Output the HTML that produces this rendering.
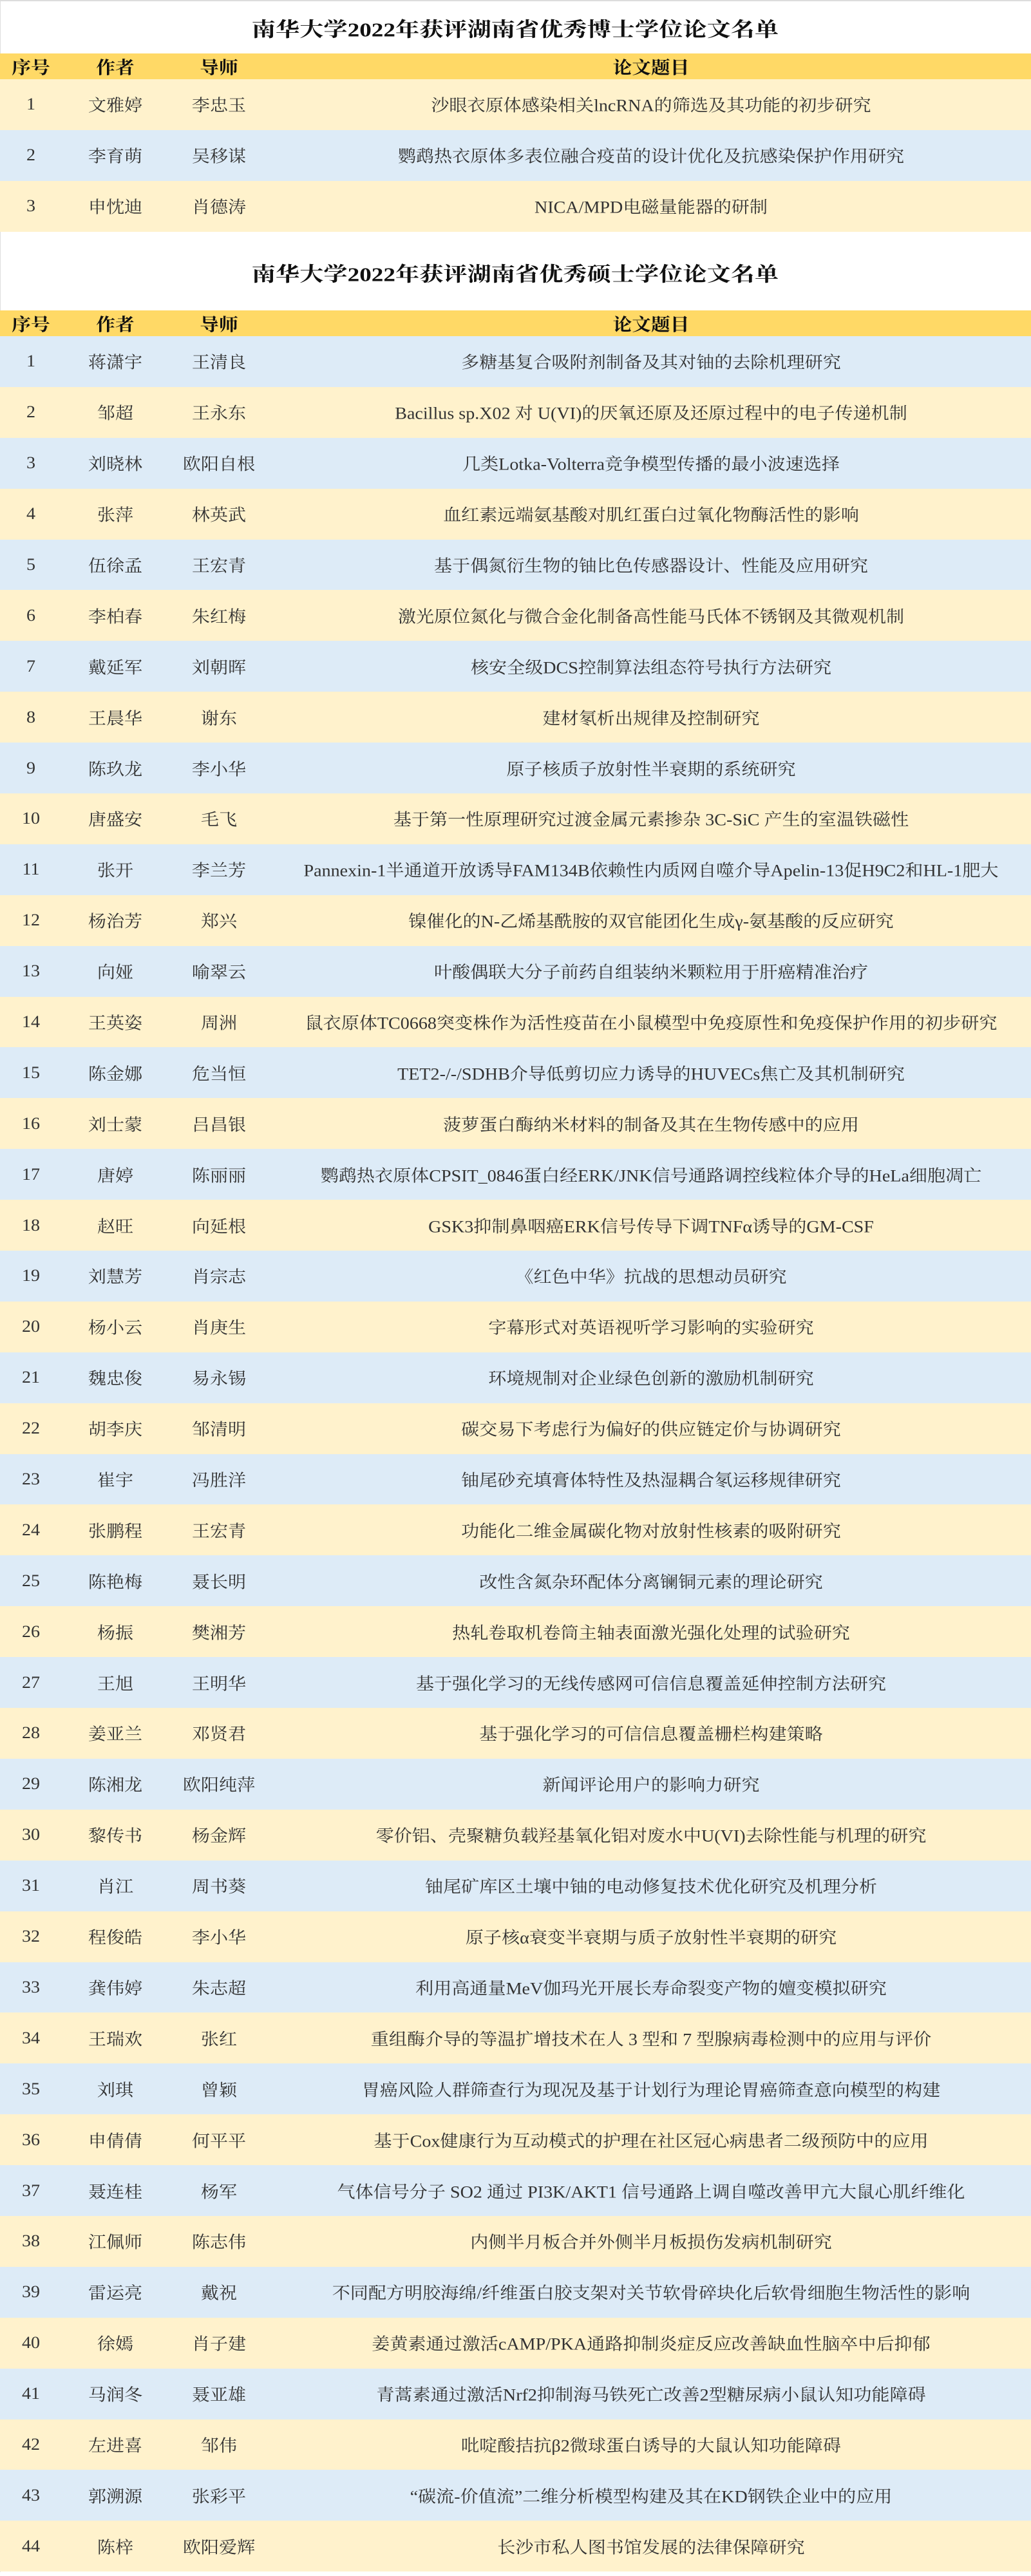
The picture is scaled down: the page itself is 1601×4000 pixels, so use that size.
<!DOCTYPE html>
<html><head><meta charset="utf-8"><style>
html,body{margin:0;padding:0;background:#fff;}
body{width:1601px;height:4000px;overflow:hidden;position:relative;font-family:"Liberation Serif","Noto Serif CJK SC",serif;color:#333;}
.topline{position:absolute;left:0;top:0;width:1601px;height:2px;background:#ddd;}
.leftline{position:absolute;left:0;top:0;width:1px;height:3994px;background:#ddd;}
.t{position:absolute;left:800px;transform:translate(-50%,-50%) scaleX(1.2);font-size:31px;font-weight:bold;color:#111;white-space:nowrap;}
.sec{position:absolute;left:0;width:1601px;}
.r{position:relative;height:78.9px;width:1601px;}
.h{height:40px;background:#FFD966;font-weight:bold;color:#111;font-size:27px;}
.y{background:#FFF2CC;}
.b{background:#DDEBF7;}
.c{position:absolute;top:50%;transform:translate(-50%,-50%) scaleX(1.08);white-space:nowrap;font-size:26px;}
.h .c{font-size:27px;transform:translate(-50%,-50%) scaleX(1.1);}
.a{left:48px}.w{left:179px}.d{left:340px}.p{left:1011px}
</style></head><body>
<div class="topline"></div>
<div class="leftline"></div>
<div class="t" style="top:43px">南华大学2022年获评湖南省优秀博士学位论文名单</div>
<div class="sec" style="top:83px">
<div class="r h"><span class="c a">序号</span><span class="c w">作者</span><span class="c d">导师</span><span class="c p">论文题目</span></div>
<div class="r y"><span class="c a">1</span><span class="c w">文雅婷</span><span class="c d">李忠玉</span><span class="c p">沙眼衣原体感染相关lncRNA的筛选及其功能的初步研究</span></div>
<div class="r b"><span class="c a">2</span><span class="c w">李育萌</span><span class="c d">吴移谋</span><span class="c p">鹦鹉热衣原体多表位融合疫苗的设计优化及抗感染保护作用研究</span></div>
<div class="r y"><span class="c a">3</span><span class="c w">申忱迪</span><span class="c d">肖德涛</span><span class="c p">NICA/MPD电磁量能器的研制</span></div>
</div>
<div class="t" style="top:423px">南华大学2022年获评湖南省优秀硕士学位论文名单</div>
<div class="sec" style="top:482px">
<div class="r h"><span class="c a">序号</span><span class="c w">作者</span><span class="c d">导师</span><span class="c p">论文题目</span></div>
<div class="r b"><span class="c a">1</span><span class="c w">蒋潇宇</span><span class="c d">王清良</span><span class="c p">多糖基复合吸附剂制备及其对铀的去除机理研究</span></div>
<div class="r y"><span class="c a">2</span><span class="c w">邹超</span><span class="c d">王永东</span><span class="c p">Bacillus sp.X02 对 U(VI)的厌氧还原及还原过程中的电子传递机制</span></div>
<div class="r b"><span class="c a">3</span><span class="c w">刘晓林</span><span class="c d">欧阳自根</span><span class="c p">几类Lotka-Volterra竞争模型传播的最小波速选择</span></div>
<div class="r y"><span class="c a">4</span><span class="c w">张萍</span><span class="c d">林英武</span><span class="c p">血红素远端氨基酸对肌红蛋白过氧化物酶活性的影响</span></div>
<div class="r b"><span class="c a">5</span><span class="c w">伍徐孟</span><span class="c d">王宏青</span><span class="c p">基于偶氮衍生物的铀比色传感器设计、性能及应用研究</span></div>
<div class="r y"><span class="c a">6</span><span class="c w">李柏春</span><span class="c d">朱红梅</span><span class="c p">激光原位氮化与微合金化制备高性能马氏体不锈钢及其微观机制</span></div>
<div class="r b"><span class="c a">7</span><span class="c w">戴延军</span><span class="c d">刘朝晖</span><span class="c p">核安全级DCS控制算法组态符号执行方法研究</span></div>
<div class="r y"><span class="c a">8</span><span class="c w">王晨华</span><span class="c d">谢东</span><span class="c p">建材氡析出规律及控制研究</span></div>
<div class="r b"><span class="c a">9</span><span class="c w">陈玖龙</span><span class="c d">李小华</span><span class="c p">原子核质子放射性半衰期的系统研究</span></div>
<div class="r y"><span class="c a">10</span><span class="c w">唐盛安</span><span class="c d">毛飞</span><span class="c p">基于第一性原理研究过渡金属元素掺杂 3C-SiC 产生的室温铁磁性</span></div>
<div class="r b"><span class="c a">11</span><span class="c w">张开</span><span class="c d">李兰芳</span><span class="c p">Pannexin-1半通道开放诱导FAM134B依赖性内质网自噬介导Apelin-13促H9C2和HL-1肥大</span></div>
<div class="r y"><span class="c a">12</span><span class="c w">杨治芳</span><span class="c d">郑兴</span><span class="c p">镍催化的N-乙烯基酰胺的双官能团化生成γ-氨基酸的反应研究</span></div>
<div class="r b"><span class="c a">13</span><span class="c w">向娅</span><span class="c d">喻翠云</span><span class="c p">叶酸偶联大分子前药自组装纳米颗粒用于肝癌精准治疗</span></div>
<div class="r y"><span class="c a">14</span><span class="c w">王英姿</span><span class="c d">周洲</span><span class="c p">鼠衣原体TC0668突变株作为活性疫苗在小鼠模型中免疫原性和免疫保护作用的初步研究</span></div>
<div class="r b"><span class="c a">15</span><span class="c w">陈金娜</span><span class="c d">危当恒</span><span class="c p">TET2-/-/SDHB介导低剪切应力诱导的HUVECs焦亡及其机制研究</span></div>
<div class="r y"><span class="c a">16</span><span class="c w">刘士蒙</span><span class="c d">吕昌银</span><span class="c p">菠萝蛋白酶纳米材料的制备及其在生物传感中的应用</span></div>
<div class="r b"><span class="c a">17</span><span class="c w">唐婷</span><span class="c d">陈丽丽</span><span class="c p">鹦鹉热衣原体CPSIT_0846蛋白经ERK/JNK信号通路调控线粒体介导的HeLa细胞凋亡</span></div>
<div class="r y"><span class="c a">18</span><span class="c w">赵旺</span><span class="c d">向延根</span><span class="c p">GSK3抑制鼻咽癌ERK信号传导下调TNFα诱导的GM-CSF</span></div>
<div class="r b"><span class="c a">19</span><span class="c w">刘慧芳</span><span class="c d">肖宗志</span><span class="c p">《红色中华》抗战的思想动员研究</span></div>
<div class="r y"><span class="c a">20</span><span class="c w">杨小云</span><span class="c d">肖庚生</span><span class="c p">字幕形式对英语视听学习影响的实验研究</span></div>
<div class="r b"><span class="c a">21</span><span class="c w">魏忠俊</span><span class="c d">易永锡</span><span class="c p">环境规制对企业绿色创新的激励机制研究</span></div>
<div class="r y"><span class="c a">22</span><span class="c w">胡李庆</span><span class="c d">邹清明</span><span class="c p">碳交易下考虑行为偏好的供应链定价与协调研究</span></div>
<div class="r b"><span class="c a">23</span><span class="c w">崔宇</span><span class="c d">冯胜洋</span><span class="c p">铀尾砂充填膏体特性及热湿耦合氡运移规律研究</span></div>
<div class="r y"><span class="c a">24</span><span class="c w">张鹏程</span><span class="c d">王宏青</span><span class="c p">功能化二维金属碳化物对放射性核素的吸附研究</span></div>
<div class="r b"><span class="c a">25</span><span class="c w">陈艳梅</span><span class="c d">聂长明</span><span class="c p">改性含氮杂环配体分离镧铜元素的理论研究</span></div>
<div class="r y"><span class="c a">26</span><span class="c w">杨振</span><span class="c d">樊湘芳</span><span class="c p">热轧卷取机卷筒主轴表面激光强化处理的试验研究</span></div>
<div class="r b"><span class="c a">27</span><span class="c w">王旭</span><span class="c d">王明华</span><span class="c p">基于强化学习的无线传感网可信信息覆盖延伸控制方法研究</span></div>
<div class="r y"><span class="c a">28</span><span class="c w">姜亚兰</span><span class="c d">邓贤君</span><span class="c p">基于强化学习的可信信息覆盖栅栏构建策略</span></div>
<div class="r b"><span class="c a">29</span><span class="c w">陈湘龙</span><span class="c d">欧阳纯萍</span><span class="c p">新闻评论用户的影响力研究</span></div>
<div class="r y"><span class="c a">30</span><span class="c w">黎传书</span><span class="c d">杨金辉</span><span class="c p">零价铝、壳聚糖负载羟基氧化铝对废水中U(VI)去除性能与机理的研究</span></div>
<div class="r b"><span class="c a">31</span><span class="c w">肖江</span><span class="c d">周书葵</span><span class="c p">铀尾矿库区土壤中铀的电动修复技术优化研究及机理分析</span></div>
<div class="r y"><span class="c a">32</span><span class="c w">程俊皓</span><span class="c d">李小华</span><span class="c p">原子核α衰变半衰期与质子放射性半衰期的研究</span></div>
<div class="r b"><span class="c a">33</span><span class="c w">龚伟婷</span><span class="c d">朱志超</span><span class="c p">利用高通量MeV伽玛光开展长寿命裂变产物的嬗变模拟研究</span></div>
<div class="r y"><span class="c a">34</span><span class="c w">王瑞欢</span><span class="c d">张红</span><span class="c p">重组酶介导的等温扩增技术在人 3 型和 7 型腺病毒检测中的应用与评价</span></div>
<div class="r b"><span class="c a">35</span><span class="c w">刘琪</span><span class="c d">曾颖</span><span class="c p">胃癌风险人群筛查行为现况及基于计划行为理论胃癌筛查意向模型的构建</span></div>
<div class="r y"><span class="c a">36</span><span class="c w">申倩倩</span><span class="c d">何平平</span><span class="c p">基于Cox健康行为互动模式的护理在社区冠心病患者二级预防中的应用</span></div>
<div class="r b"><span class="c a">37</span><span class="c w">聂连桂</span><span class="c d">杨军</span><span class="c p">气体信号分子 SO2 通过 PI3K/AKT1 信号通路上调自噬改善甲亢大鼠心肌纤维化</span></div>
<div class="r y"><span class="c a">38</span><span class="c w">江佩师</span><span class="c d">陈志伟</span><span class="c p">内侧半月板合并外侧半月板损伤发病机制研究</span></div>
<div class="r b"><span class="c a">39</span><span class="c w">雷运亮</span><span class="c d">戴祝</span><span class="c p">不同配方明胶海绵/纤维蛋白胶支架对关节软骨碎块化后软骨细胞生物活性的影响</span></div>
<div class="r y"><span class="c a">40</span><span class="c w">徐嫣</span><span class="c d">肖子建</span><span class="c p">姜黄素通过激活cAMP/PKA通路抑制炎症反应改善缺血性脑卒中后抑郁</span></div>
<div class="r b"><span class="c a">41</span><span class="c w">马润冬</span><span class="c d">聂亚雄</span><span class="c p">青蒿素通过激活Nrf2抑制海马铁死亡改善2型糖尿病小鼠认知功能障碍</span></div>
<div class="r y"><span class="c a">42</span><span class="c w">左进喜</span><span class="c d">邹伟</span><span class="c p">吡啶酸拮抗β2微球蛋白诱导的大鼠认知功能障碍</span></div>
<div class="r b"><span class="c a">43</span><span class="c w">郭溯源</span><span class="c d">张彩平</span><span class="c p">“碳流-价值流”二维分析模型构建及其在KD钢铁企业中的应用</span></div>
<div class="r y"><span class="c a">44</span><span class="c w">陈梓</span><span class="c d">欧阳爱辉</span><span class="c p">长沙市私人图书馆发展的法律保障研究</span></div>
</div>
</body></html>
